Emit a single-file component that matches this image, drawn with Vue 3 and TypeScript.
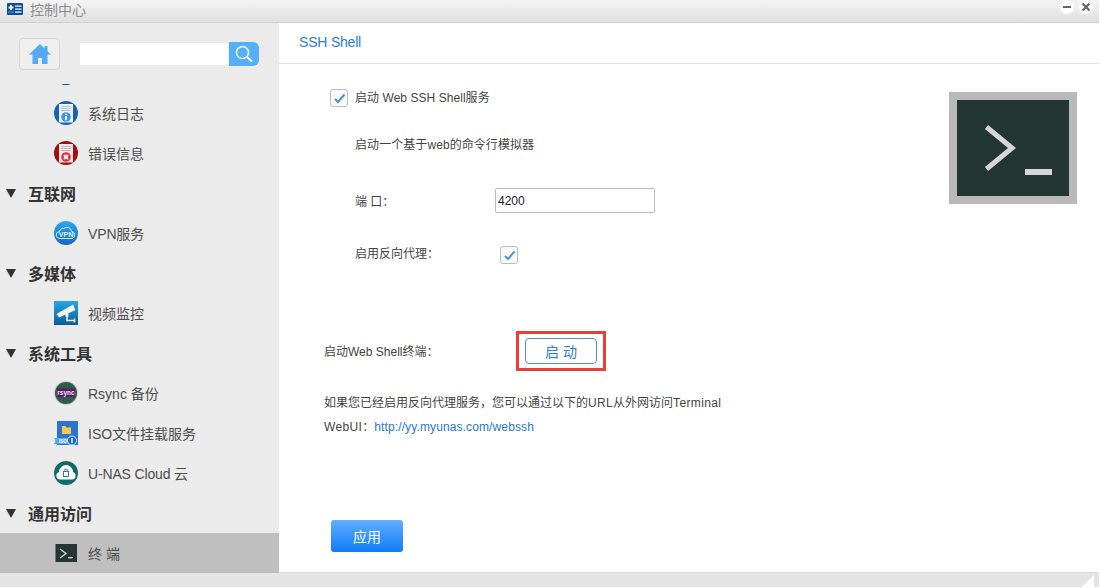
<script setup lang="ts">
interface NavRow {
  label: string
  kind: 'group' | 'item'
  icon?: string
  active?: boolean
  tight?: boolean
}

const rows: NavRow[] = [
  { label: '', kind: 'item', icon: 'navy' },
  { label: '系统日志', kind: 'item', icon: 'log' },
  { label: '错误信息', kind: 'item', icon: 'err' },
  { label: '互联网', kind: 'group' },
  { label: 'VPN服务', kind: 'item', icon: 'vpn', tight: true },
  { label: '多媒体', kind: 'group' },
  { label: '视频监控', kind: 'item', icon: 'cam' },
  { label: '系统工具', kind: 'group' },
  { label: 'Rsync 备份', kind: 'item', icon: 'rsync' },
  { label: 'ISO文件挂载服务', kind: 'item', icon: 'iso' },
  { label: 'U-NAS Cloud 云', kind: 'item', icon: 'cloud', tight: true },
  { label: '通用访问', kind: 'group' },
  { label: '终 端', kind: 'item', icon: 'term', active: true },
]
</script>

<template>
  <div class="win">
    <header class="titlebar">
      <svg class="app-icon" viewBox="0 0 16 12" width="16" height="12">
        <rect width="16" height="12" rx="1" fill="#0b4f9e" />
        <path d="M3 2h2v1.500h1.500v2H5V7H3V5.500H1.500v-2H3z" fill="#f6eec8" />
        <path d="M1.500 9h1M3.500 9h1M5.500 9h1" stroke="#cfe0f5" stroke-width="1" />
        <rect x="8" y="2.500" width="6.500" height="1.200" fill="#fff" />
        <rect x="8" y="5.500" width="6.500" height="1.200" fill="#fff" />
        <rect x="8" y="8.500" width="6.500" height="1.200" fill="#fff" />
      </svg>
      <span class="title">控制中心</span>
      <div class="win-btns">
        <span class="win-btn"><svg viewBox="0 0 14 14" width="14" height="14"><rect x="3" y="6" width="8" height="2" fill="#666" /></svg></span>
        <span class="win-btn"><svg viewBox="0 0 14 14" width="14" height="14"><path d="M3.500 3.500l7 7M10.500 3.500l-7 7" stroke="#666" stroke-width="2.200" /></svg></span>
      </div>
    </header>

    <div class="body">
      <aside class="sidebar">
        <div class="tools">
          <button class="home" type="button">
            <svg viewBox="0 0 24 22" width="24" height="22">
              <path d="M12 1L1 11.500h3.500V21h5.500v-6h4v6h5.500v-9.500H23l-3.500-3.300V3h-3v2.400z" fill="#55a9f2" />
            </svg>
          </button>
          <input class="search" type="text" />
          <button class="search-btn" type="button">
            <svg viewBox="0 0 20 20" width="20" height="20">
              <circle cx="8.500" cy="8.500" r="6" fill="none" stroke="#fff" stroke-width="1.400" />
              <path d="M13 13l5 4.500" stroke="#fff" stroke-width="2" />
            </svg>
          </button>
        </div>

        <div class="nav-clip">
          <ul class="nav">
            <li v-for="(row, i) in rows" :key="i" class="row" :class="[row.kind, { active: row.active }]">
              <template v-if="row.kind === 'group'">
                <svg class="tri" viewBox="0 0 10 9" width="10" height="9"><path d="M0 0h10L5 9z" fill="#333" /></svg>
                <span class="group-label">{{ row.label }}</span>
              </template>
              <template v-else>
                <svg class="ico" viewBox="0 0 24 24" width="24" height="24">
                  <template v-if="row.icon === 'navy'">
                    <circle cx="12" cy="12" r="12" fill="#123f70" />
                  </template>
                  <template v-else-if="row.icon === 'log'">
                    <circle cx="12" cy="12" r="12" fill="#1562b5" />
                    <path d="M5 3h14v18.500H5z" fill="#eef2f6" />
                    <path d="M7 5.500h10M7 7.500h10M7 9.500h10" stroke="#b4c0cc" stroke-width="1" />
                    <circle cx="12" cy="16" r="4.800" fill="#3f97e8" />
                    <path d="M11.100 15h1.800v4.300h-1.800zM11.100 12.700h1.800v1.400h-1.800z" fill="#fff" />
                  </template>
                  <template v-else-if="row.icon === 'err'">
                    <circle cx="12" cy="12" r="12" fill="#a30d0f" />
                    <path d="M5 3h14v18.500H5z" fill="#efeaea" />
                    <path d="M7 5.500h10M7 7.500h10M7 9.500h10" stroke="#c4b4b4" stroke-width="1" />
                    <circle cx="12" cy="16" r="4.800" fill="#e2323c" />
                    <path d="M10 14l4 4M14 14l-4 4" stroke="#fff" stroke-width="1.800" />
                  </template>
                  <template v-else-if="row.icon === 'vpn'">
                    <defs>
                      <linearGradient id="vpnG" x1="0" y1="0" x2="0" y2="1">
                        <stop offset="0" stop-color="#2aa9f0" />
                        <stop offset="1" stop-color="#1565c8" />
                      </linearGradient>
                    </defs>
                    <circle cx="12" cy="12" r="12" fill="url(#vpnG)" />
                    <path d="M6 17.500a3.500 3.500 0 0 1-.5-7 4 4 0 0 1 4.500-3 4.500 4.500 0 0 1 7.500 2.800 3.700 3.700 0 0 1 .5 7.200z" fill="none" stroke="#d8eefc" stroke-width="1" />
                    <text x="12" y="15.500" class="t-vpn">VPN</text>
                  </template>
                  <template v-else-if="row.icon === 'cam'">
                    <defs>
                      <linearGradient id="camG" x1="0" y1="0" x2="0" y2="1">
                        <stop offset="0" stop-color="#25a7e6" />
                        <stop offset="1" stop-color="#0b5b9a" />
                      </linearGradient>
                    </defs>
                    <rect width="24" height="24" fill="url(#camG)" />
                    <path d="M2.500 13L19 3.500 21.500 9 5 16.500z" fill="#f3f8fb" />
                    <path d="M13 14v5.500h7M20.500 17.500v4" stroke="#f3f8fb" stroke-width="1.500" fill="none" />
                    <rect x="11.500" y="12.500" width="3" height="3" fill="#f3f8fb" />
                  </template>
                  <template v-else-if="row.icon === 'rsync'">
                    <circle cx="12" cy="12" r="12" fill="#c9cfcb" />
                    <circle cx="12" cy="12" r="11" fill="#2f5c4a" />
                    <rect x="3" y="7.500" width="18" height="8.500" fill="#5e1a67" />
                    <text x="12" y="14.200" class="t-rsync">rsync</text>
                  </template>
                  <template v-else-if="row.icon === 'iso'">
                    <path d="M3 0h21v24H3z" fill="#2b74d2" />
                    <path d="M8 5h3.500l1 1.500H17V13H8z" fill="#f4c94e" />
                    <path d="M0 17h20v6H0l1.500-3z" fill="#5fa6ea" />
                    <text x="9" y="22" class="t-iso">ISO</text>
                    <circle cx="18" cy="19.500" r="4.500" fill="#1769c4" stroke="#d8ecfb" stroke-width="1" />
                    <path d="M18 17v5" stroke="#fff" stroke-width="1.400" />
                  </template>
                  <template v-else-if="row.icon === 'cloud'">
                    <circle cx="12" cy="12" r="12" fill="#0e6b66" />
                    <path d="M6 18.500a3.800 3.800 0 0 1-1-7.400 7 7 0 0 1 14 0 3.800 3.800 0 0 1-1 7.400z" fill="#fff" />
                    <rect x="9.500" y="10.500" width="5" height="5" fill="none" stroke="#2b8a82" stroke-width="1" />
                    <path d="M10.500 10.500v-1a1.500 1.500 0 0 1 3 0v1" fill="none" stroke="#2b8a82" stroke-width="1" />
                  </template>
                  <template v-else>
                    <rect x="1" y="3" width="22" height="18" fill="#243632" />
                    <rect x="1" y="3" width="1" height="18" fill="#777" />
                    <path d="M6 8l6 4.500-6 4.500" fill="none" stroke="#d8d8d8" stroke-width="1.300" />
                    <rect x="14" y="16" width="5" height="1.300" fill="#d8d8d8" />
                  </template>
                </svg>
                <span class="item-label" :class="{ tight: row.tight }">{{ row.label }}</span>
              </template>
            </li>
          </ul>
        </div>
      </aside>

      <main class="main">
        <div class="tab-head">SSH Shell</div>

        <div class="top">
          <div class="fields">
            <div class="check-row">
              <span class="check">
                <svg viewBox="0 0 16 16" width="16" height="16"><path d="M4 9l3 3 6.500-7.500" fill="none" stroke="#4a90e2" stroke-width="2" /></svg>
              </span>
              <span class="check-text">启动 Web SSH Shell服务</span>
            </div>
            <p class="desc">启动一个基于web的命令行模拟器</p>
            <div class="port-row">
              <label class="port-label">端 口：</label>
              <input class="port" type="text" value="4200" />
            </div>
            <div class="proxy-row">
              <span class="proxy-label">启用反向代理：</span>
              <span class="check">
                <svg viewBox="0 0 16 16" width="16" height="16"><path d="M4 9l3 3 6.500-7.500" fill="none" stroke="#4a90e2" stroke-width="2" /></svg>
              </span>
            </div>
          </div>
          <div class="term-logo">
            <svg viewBox="0 0 112 96" width="112" height="96">
              <rect width="112" height="96" fill="#243632" />
              <path d="M29.500 27L55 48 29.500 69" fill="none" stroke="#d6d6d6" stroke-width="5" />
              <rect x="68" y="69" width="27" height="6" fill="#d6d6d6" />
            </svg>
          </div>
        </div>

        <div class="start-row">
          <span class="start-label">启动Web Shell终端：</span>
          <div class="highlight">
            <button class="start" type="button">启 动</button>
          </div>
        </div>

        <div class="note">
          <p>如果您已经启用反向代理服务，您可以通过以下的<span class="wide">URL</span>从外网访问<span class="wide">Terminal</span></p>
          <p><span class="wide">WebUI</span>：<a class="link">http://yy.myunas.com/webssh</a></p>
        </div>

        <button class="apply" type="button">应用</button>
      </main>
    </div>

    <footer class="footer">
      <svg viewBox="0 0 12 12" width="12" height="12"><path d="M12 0v12H0z" fill="#fff" /></svg>
    </footer>
  </div>
</template>

<style>
html, body { margin: 0; background: #fff; }
</style>

<style scoped>
.win {
  width: 1099px;
  height: 587px;
  display: flex;
  flex-direction: column;
  overflow: hidden;
  font-family: "Liberation Sans", "Noto Sans CJK SC", sans-serif;
  font-size: 12px;
  color: #444;
}
.titlebar {
  flex: none;
  display: flex;
  align-items: center;
  box-sizing: border-box;
  height: 23px;
  padding: 0 6px 4px 7px;
  border-bottom: 1px solid #d2d2d2;
  background: linear-gradient(#f4f4f4, #dfdfdf);
}
.app-icon { flex: none; }
.title { margin-left: 7px; font-size: 14px; color: #8c8c8c; }
.win-btns { margin-left: auto; display: flex; gap: 5px; align-self: flex-start; }
.win-btn {
  width: 14px;
  height: 14px;
  border-radius: 50%;
  background: #fff;
  display: block;
}
.win-btn svg { display: block; }
.body { flex: 1; min-height: 0; display: flex; }
.sidebar {
  width: 279px;
  flex: none;
  background: #ebebeb;
  display: flex;
  flex-direction: column;
}
.tools {
  height: 61px;
  flex: none;
  display: flex;
  align-items: flex-start;
  box-sizing: border-box;
  padding: 15px 0 0 19px;
}
.home {
  width: 41px;
  height: 32px;
  padding: 0;
  border: 1px solid #d4d4d4;
  border-radius: 4px;
  background: #efefef;
  display: flex;
  align-items: center;
  justify-content: center;
}
.search {
  width: 148px;
  height: 22px;
  margin: 5px 0 0 20px;
  padding: 0;
  border: 0;
  background: #fff;
  box-sizing: border-box;
}
.search-btn {
  width: 30px;
  height: 24px;
  margin: 4px 0 0 1px;
  padding: 0;
  border: 0;
  border-radius: 0 6px 6px 0;
  background: #55b0fb;
  display: flex;
  align-items: center;
  justify-content: center;
}
.nav-clip { flex: 1; min-height: 0; overflow: hidden; }
.nav { list-style: none; margin: -31px 0 0; padding: 0; }
.row { height: 40px; display: flex; align-items: center; }
.group { padding-left: 6px; }
.tri { flex: none; }
.group-label {
  margin-left: 12px;
  font-size: 16px;
  font-weight: 700;
  color: #333;
}
.item { padding-left: 54px; }
.item.active { background: #bfbfbf; }
.ico { flex: none; display: block; }
.item-label { margin-left: 10px; font-size: 14px; color: #4d4d4d; }
.item-label.tight { letter-spacing: -0.15px; }
.t-vpn { font-size: 7px; font-weight: 700; fill: #e6f4fe; text-anchor: middle; }
.t-rsync { font-size: 6.5px; font-weight: 700; fill: #f0e6f2; text-anchor: middle; }
.t-iso { font-size: 4.5px; font-weight: 700; fill: #fff; text-anchor: middle; }
.main {
  flex: 1;
  min-width: 0;
  background: #fff;
  border-bottom: 1px solid #dcdcdc;
}
.tab-head {
  height: 40px;
  line-height: 39px;
  padding-left: 20px;
  font-size: 14px;
  letter-spacing: -0.2px;
  color: #2a7ee2;
  border-bottom: 1px solid #e4e4e4;
}
.top { display: flex; justify-content: space-between; align-items: flex-start; height: 198px; }
.fields { padding-top: 25px; }
.check-row { display: flex; align-items: center; margin-left: 51px; height: 18px; }
.check-text { margin: 0 0 4px 7px; letter-spacing: 0.05px; }
.check {
  width: 18px;
  height: 18px;
  flex: none;
  box-sizing: border-box;
  border: 1px solid #bdbdbd;
  border-radius: 3px;
  background: #f9f9f9;
  display: flex;
  align-items: center;
  justify-content: center;
}
.desc { margin: 29px 0 0 76px; line-height: 18px; letter-spacing: 0.07px; }
.port-row { display: flex; align-items: center; margin: 34px 0 0 76px; }
.port-label { width: 140px; }
.port {
  width: 160px;
  height: 25px;
  box-sizing: border-box;
  padding: 0 0 0 2px;
  border: 1px solid #bdbdbd;
  border-radius: 2px;
  font-family: "Liberation Sans", sans-serif;
  font-size: 12px;
  color: #222;
}
.proxy-row { display: flex; align-items: center; margin: 31px 0 0 76px; }
.proxy-label { width: 145px; margin-bottom: 4px; }
.term-logo {
  margin: 28px 22px 0 0;
  border: 8px solid #b9b9b9;
  line-height: 0;
}
.start-row {
  display: flex;
  align-items: center;
  height: 40px;
  margin-top: 69px;
  padding-left: 45px;
}
.start-label { width: 192px; margin-bottom: 2px; }
.highlight {
  width: 90px;
  height: 40px;
  box-sizing: border-box;
  border: 3px solid #ee3b3b;
  display: flex;
  align-items: center;
  justify-content: center;
}
.start {
  width: 72px;
  height: 26px;
  padding: 0;
  border: 1px solid #4a90e2;
  border-radius: 4px;
  background: #fff;
  color: #2a7ee2;
  font-family: inherit;
  font-size: 14px;
}
.note { margin: 20px 0 0 45px; }
.note p { margin: 0; line-height: 24px; }
.wide { letter-spacing: 0.35px; }
.link { color: #2a78d6; letter-spacing: 0.12px; }
.apply {
  display: block;
  width: 72px;
  height: 32px;
  margin: 81px 0 0 52px;
  padding: 0;
  border: 0;
  border-radius: 3px;
  background: linear-gradient(#62aefc, #0f7cfb);
  color: #fff;
  font-family: inherit;
  font-size: 14px;
}
.footer {
  height: 14px;
  flex: none;
  background: #e4e4e4;
  display: flex;
  justify-content: flex-end;
  align-items: flex-end;
  padding-right: 5px;
}
.footer svg { display: block; }
</style>
